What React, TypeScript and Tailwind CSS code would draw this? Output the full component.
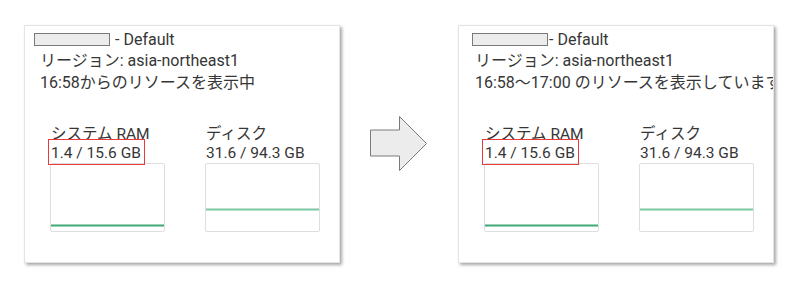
const font = { fontFamily: '"Roboto", "Noto Sans CJK JP", sans-serif' }

type Metric = { label: string; value: string; lineY: number; color: string; mark?: boolean }

const metrics: Metric[] = [
    { label: "システム RAM", value: "1.4 / 15.6 GB", lineY: 62, color: "#3fa877", mark: true },
    { label: "ディスク", value: "31.6 / 94.3 GB", lineY: 46, color: "#7cc6a2" },
]

const Chart = ({ lineY, color }: { lineY: number; color: string }) => (
    <div className="h-[69px] w-[115px] rounded-[2px] border border-[#dedede] bg-white overflow-hidden">
        <svg width="113" height="67" className="block">
            <line x1="0" x2="113" y1={lineY - 0.5} y2={lineY - 0.5} stroke={color} strokeWidth="2.2" />
        </svg>
    </div>
)

const Panel = ({ boxPad, textPad, gapAfterBox, range }: { boxPad: string; textPad: string; gapAfterBox: boolean; range: string }) => {
    return (
        <div
            className="relative h-[238px] w-[316px] shrink-0 overflow-hidden border border-[#e4e4e4] bg-white text-[16px] text-[#363636] shadow-[2px_2px_3px_rgba(0,0,0,0.35)]"
            style={font}
        >
            <div className="pt-[3px] leading-[21px] whitespace-nowrap">
                <div className={`flex items-center ${boxPad}`}>
                    <span className="inline-block h-[13px] w-[76px] border border-[#7a7a7a] bg-[#ececec]" />
                    <span className={gapAfterBox ? "ml-[5px]" : "ml-[1px]"}>- Default</span>
                </div>
                <div className={textPad}>リージョン: asia-northeast1</div>
                <div className={`${textPad} mt-[1px]`}>{range}</div>
            </div>

            <div className="mt-[31px] flex gap-[40px] pl-[25px] text-[15.5px]">
                {metrics.map((m) => (
                    <div key={m.label} className="flex w-[115px] flex-col">
                        <div className="leading-[20px] whitespace-nowrap pl-[1px]">{m.label}</div>
                        <div className="relative leading-[19px] whitespace-nowrap pl-[1px]">
                            {m.value}
                            {m.mark && (
                                <span className="absolute left-[-2px] top-[-5px] h-[26px] w-[97px] border border-[#e83a3a]" />
                            )}
                        </div>
                        <Chart lineY={m.lineY} color={m.color} />
                    </div>
                ))}
            </div>
        </div>
    )
}

const Arrow = () => (
    <svg width="60" height="58" viewBox="0 0 60 58" className="mx-[29px] shrink-0">
        <polygon
            points="1.5,15 30.5,15 30.5,1.5 57.5,28.5 30.5,55.5 30.5,41 1.5,41"
            fill="#ececec"
            stroke="#7a7a7a"
            strokeWidth="1"
        />
    </svg>
)

export default function App() {
    return (
        <div className="flex h-[295px] w-[800px] items-center bg-white pb-[8px] pl-[24px]">
            <Panel boxPad="pl-[9px]" textPad="pl-[15px]" gapAfterBox range="16:58からのリソースを表示中" />
            <Arrow />
            <Panel boxPad="pl-[13px]" textPad="pl-[16px]" gapAfterBox={false} range="16:58〜17:00 のリソースを表示しています" />
        </div>
    )
}
